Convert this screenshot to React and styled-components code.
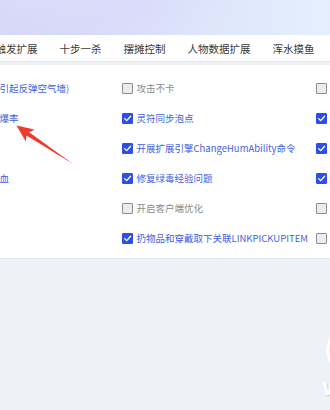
import React from "react";
import styled, { createGlobalStyle } from "styled-components";

const Global = createGlobalStyle`
  html, body { margin: 0; padding: 0; background: #eef1f6; }
  body { font-family: "Noto Sans CJK SC", "Noto Sans", sans-serif; }
  #root { width: 330px; height: 410px; overflow: hidden; position: relative; }
`;

const Page = styled.div`
  width: 330px;
  height: 410px;
  overflow: hidden;
  position: relative;
  background: #eef1f6;
`;

const Banner = styled.div`
  height: 35px;
  background:
    radial-gradient(ellipse 140px 50px at 40px -12px, rgba(228, 228, 253, 0.45), rgba(228, 228, 253, 0) 70%),
    radial-gradient(ellipse 180px 80px at 200px 60px, rgba(226, 236, 252, 0.5), rgba(226, 236, 252, 0) 70%),
    linear-gradient(90deg, #d6d8f9 0%, #dadcfa 45%, #e0e9fc 75%, #e5effd 100%);
`;

const TabBar = styled.div`
  height: 27px;
  background: #ffffff;
  display: flex;
  align-items: center;
  border-bottom: 1px solid #e6e9ef;
  box-sizing: border-box;
  overflow: hidden;
`;

const TabList = styled.div`
  display: flex;
  gap: 22px;
  margin-left: -4.5px;
`;

const Tab = styled.div`
  font-size: 10.5px;
  line-height: 27px;
  color: #3a3a3a;
  white-space: nowrap;
`;

const Panel = styled.div`
  margin-top: 3px;
  background: #ffffff;
  padding: 8px 0 5px;
  overflow: hidden;
  border-bottom: 1px solid #e3e6ec;
`;

const Grid = styled.div`
  display: grid;
  grid-template-columns: repeat(3, 194px);
  grid-template-rows: repeat(6, 30px);
  grid-auto-flow: column;
  margin-left: -72px;
`;

const Item = styled.div`
  display: flex;
  align-items: center;
  height: 30px;
  white-space: nowrap;
  min-width: 0;
`;

const Box = styled.span`
  flex: none;
  width: 11px;
  height: 11px;
  box-sizing: border-box;
  border-radius: 1px;
  margin-right: 3.5px;
  display: flex;
  align-items: center;
  justify-content: center;
  background: ${(p) => (p.$on ? "#2d4ee8" : "#ececec")};
  border: 1px solid ${(p) => (p.$on ? "#2d4ee8" : "#8d8d8d")};
`;

const Label = styled.span`
  font-size: 9.5px;
  line-height: 12px;
  color: ${(p) => (p.$on ? "#3f5fe0" : "#8a8a8a")};
`;

const Arrow = styled.svg`
  position: absolute;
  left: 0;
  top: 0;
  pointer-events: none;
`;

const Watermark = styled.div`
  position: absolute;
  left: 322px;
  top: 332px;
  color: #ffffff;
  font-family: "DejaVu Sans", sans-serif;
  text-shadow: 1px 1px 1px rgba(120, 120, 120, 0.35);
  display: flex;
  flex-direction: column;
  line-height: 1;
`;

const WmRing = styled.span`
  font-size: 36px;
  margin-left: 1px;
`;

const WmText = styled.span`
  font-size: 18px;
  font-weight: bold;
  margin-top: 12px;
`;

const tabs = ["触发扩展", "十步一杀", "摆摊控制", "人物数据扩展", "浑水摸鱼"];

const items = [
  ["修复穿人穿怪引起反弹空气墙)", true],
  ["开启怪物掉落爆率", true],
  ["开启挂机", true],
  ["修复英雄不回血", true],
  ["", null],
  ["", null],
  ["攻击不卡", false],
  ["灵符同步泡点", true],
  ["开展扩展引擎ChangeHumAbility命令", true],
  ["修复绿毒经验问题", true],
  ["开启客户端优化", false],
  ["扔物品和穿戴取下关联LINKPICKUPITEM", true],
  ["禁止交易", false],
  ["开启自动拾取", true],
  ["开启连击", true],
  ["修复内功", true],
  ["开启过滤", false],
  ["开启行会", false],
];

function Check({ on }) {
  return (
    <Box $on={on}>
      {on && (
        <svg width="9" height="9" viewBox="0 0 9 9">
          <path d="M1.6 4.6 L3.7 6.6 L7.6 2.2" fill="none" stroke="#ffffff" strokeWidth="1.3" strokeLinecap="round" strokeLinejoin="round" />
        </svg>
      )}
    </Box>
  );
}

export default function App() {
  return (
    <Page>
      <Global />
      <Banner />
      <TabBar>
        <TabList>
          {tabs.map((t) => (
            <Tab key={t}>{t}</Tab>
          ))}
        </TabList>
      </TabBar>
      <Panel>
        <Grid>
          {items.map(([text, on], i) =>
            on === null ? (
              <Item key={i} />
            ) : (
              <Item key={i}>
                <Check on={on} />
                <Label $on={on}>{text}</Label>
              </Item>
            )
          )}
        </Grid>
      </Panel>
      <Arrow width="330" height="410" viewBox="0 0 330 410">
        <polygon
          points="16.5,125.5 34.5,129.5 29.2,132.2 73,164 26.5,135.4 25.8,141.5"
          fill="#f03a2c"
        />
      </Arrow>
      <Watermark>
        <WmRing>(</WmRing>
        <WmText>W</WmText>
      </Watermark>
    </Page>
  );
}
